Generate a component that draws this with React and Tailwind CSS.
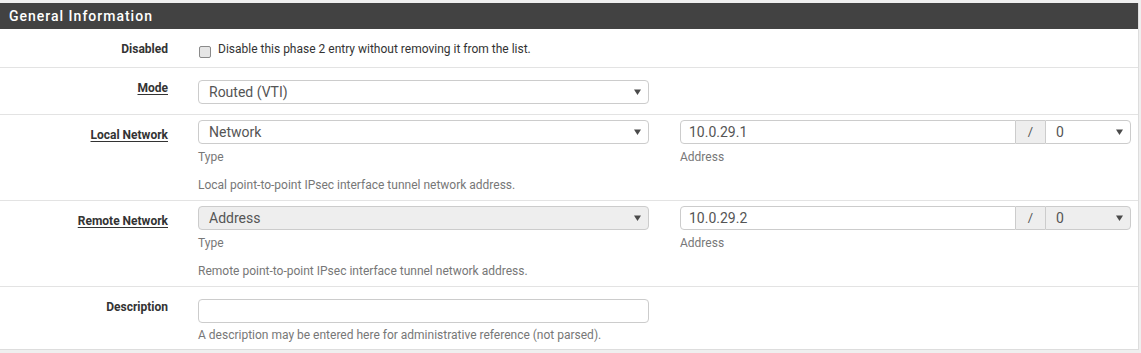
import React from 'react'

const font = { fontFamily: 'Roboto, "Liberation Sans", sans-serif' }

function Caret() {
  return (
    <svg width="7" height="6" viewBox="0 0 7 6" className="shrink-0">
      <path d="M0 0.5h7L3.5 6z" fill="#4a4a4a" />
    </svg>
  )
}

function FakeSelect({ value, disabled, className = '' }) {
  return (
    <div
      className={`h-[24px] flex items-center justify-between pl-[10px] pr-[7px] border border-[#cccccc] text-[14px] text-[#555] ${
        disabled ? 'bg-[#eeeeee]' : 'bg-white'
      } ${className}`}
    >
      <span>{value}</span>
      <Caret />
    </div>
  )
}

function Label({ children, link, className = '' }) {
  return (
    <div className={`w-[168px] shrink-0 text-right text-[12px] font-bold leading-[17px] text-[#333] ${className}`}>
      <span className={link ? 'underline underline-offset-2' : ''}>{children}</span>
    </div>
  )
}

function SubNetwork({ address, disabled }) {
  return (
    <div className="w-[451px]">
      <div className="flex h-[24px]">
        <div className="flex-1 flex items-center pl-[8px] border border-[#cccccc] rounded-l-[4px] text-[14px] text-[#555] bg-white">
          {address}
        </div>
        <div className="w-[29px] flex items-center justify-center border-y border-[#cccccc] bg-[#eeeeee] text-[13px] text-[#555]">
          /
        </div>
        <FakeSelect value="0" disabled={disabled} className="w-[86px] rounded-r-[4px]" />
      </div>
      <div className="mt-[5px] text-[12px] leading-[17px] text-[#777]">Address</div>
    </div>
  )
}

function NetworkRow({ label, type, address, help, disabled }) {
  return (
    <div className="flex border-b border-[#e3e3e3] h-[86px]">
      <Label link className="pt-[12px]">{label}</Label>
      <div className="ml-[30px] pt-[5px]">
        <div className="flex gap-[31px]">
          <div className="w-[451px]">
            <FakeSelect value={type} disabled={disabled} className="rounded-[4px]" />
            <div className="mt-[5px] text-[12px] leading-[17px] text-[#777]">Type</div>
          </div>
          <SubNetwork address={address} disabled={disabled} />
        </div>
        <div className="mt-[11px] text-[12px] leading-[17px] text-[#777]">{help}</div>
      </div>
    </div>
  )
}

export default function App() {
  return (
    <div style={font} className="bg-[#efefef] h-[353px] pt-[3px] pr-[2px]">
      <div className="bg-white border-r border-b border-[#dddddd]">
        <div className="h-[26px] bg-[#424242] text-white text-[14px] font-medium tracking-[1px] px-[9px] flex items-center">
          General Information
        </div>

        <div className="flex border-b border-[#e3e3e3] h-[39px]">
          <Label className="pt-[12px]">Disabled</Label>
          <div className="ml-[31px] pt-[12px] flex items-start gap-[7px] text-[12px] leading-[17px] text-[#333]">
            <span className="w-[12px] h-[12px] mt-[5px] border border-[#8a8a8a] rounded-[2px] bg-[#e6e6e6]" />
            <span>Disable this phase 2 entry without removing it from the list.</span>
          </div>
        </div>

        <div className="flex border-b border-[#e3e3e3] h-[47px]">
          <Label link className="pt-[12px]">Mode</Label>
          <div className="ml-[30px] pt-[12px] w-[451px]">
            <FakeSelect value="Routed (VTI)" className="rounded-[4px]" />
          </div>
        </div>

        <NetworkRow
          label="Local Network"
          type="Network"
          address="10.0.29.1"
          help="Local point-to-point IPsec interface tunnel network address."
        />
        <NetworkRow
          label="Remote Network"
          type="Address"
          address="10.0.29.2"
          help="Remote point-to-point IPsec interface tunnel network address."
          disabled
        />

        <div className="flex h-[62px]">
          <Label className="pt-[12px]">Description</Label>
          <div className="ml-[30px] pt-[12px] w-[451px]">
            <div className="h-[24px] border border-[#cccccc] rounded-[4px] bg-white" />
            <div className="mt-[4px] text-[12px] leading-[17px] text-[#777]">
              A description may be entered here for administrative reference (not parsed).
            </div>
          </div>
        </div>
      </div>
    </div>
  )
}
